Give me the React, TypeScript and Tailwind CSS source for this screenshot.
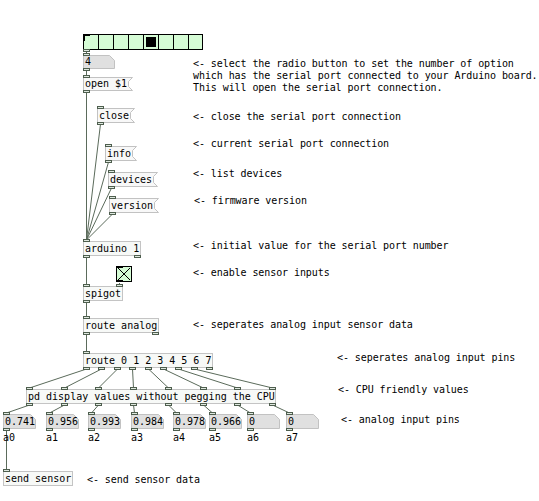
type Kind = "obj" | "msg" | "num";

type Box = {
  id: string;
  kind: Kind;
  x: number;
  y: number;
  w: number;
  h: number;
  text: string;
  ins: number;
  outs: number;
};

const MONO = "font-['DejaVu_Sans_Mono','Liberation_Mono',monospace] text-[10px] leading-[12px] text-black whitespace-pre";

const NUM_X = [3, 46, 88, 131, 173, 209, 247, 286];
const NUM_VALS = ["0.741", "0.956", "0.993", "0.984", "0.978", "0.966", "0", "0"];

const boxes: Box[] = [
  { id: "n4", kind: "num", x: 83, y: 55, w: 32, h: 14, text: "4", ins: 1, outs: 1 },
  { id: "open", kind: "msg", x: 83, y: 77, w: 46, h: 14, text: "open $1", ins: 1, outs: 1 },
  { id: "close", kind: "msg", x: 97, y: 108, w: 34, h: 15, text: "close", ins: 1, outs: 1 },
  { id: "info", kind: "msg", x: 105, y: 146, w: 28, h: 15, text: "info", ins: 1, outs: 1 },
  { id: "devices", kind: "msg", x: 108, y: 172, w: 46, h: 15, text: "devices", ins: 1, outs: 1 },
  { id: "version", kind: "msg", x: 109, y: 198, w: 46, h: 15, text: "version", ins: 1, outs: 1 },
  { id: "arduino", kind: "obj", x: 83, y: 241, w: 58, h: 15, text: "arduino 1", ins: 1, outs: 2 },
  { id: "spigot", kind: "obj", x: 83, y: 286, w: 40, h: 15, text: "spigot", ins: 2, outs: 1 },
  { id: "routeA", kind: "obj", x: 83, y: 318, w: 76, h: 15, text: "route analog", ins: 1, outs: 2 },
  { id: "route", kind: "obj", x: 83, y: 353, w: 130, h: 15, text: "route 0 1 2 3 4 5 6 7", ins: 1, outs: 9 },
  { id: "pd", kind: "obj", x: 26, y: 389, w: 250, h: 15, text: "pd display values without pegging the CPU", ins: 8, outs: 8 },
  ...NUM_X.map((x, i) => ({
    id: "a" + i,
    kind: "num" as Kind,
    x,
    y: 414,
    w: 33,
    h: 15,
    text: NUM_VALS[i],
    ins: 1,
    outs: 1,
  })),
  { id: "send", kind: "obj", x: 3, y: 471, w: 70, h: 15, text: "send sensor", ins: 1, outs: 0 },
];

const radio = { x: 83, y: 34, w: 120, h: 16 };
const toggle = { x: 116, y: 266, w: 16, h: 16 };

const comments: { x: number; y: number; lines: string[] }[] = [
  {
    x: 193,
    y: 58,
    lines: [
      "<- select the radio button to set the number of option",
      "which has the serial port connected to your Arduino board.",
      "This will open the serial port connection.",
    ],
  },
  { x: 193, y: 111, lines: ["<- close the serial port connection"] },
  { x: 193, y: 138, lines: ["<- current serial port connection"] },
  { x: 193, y: 168, lines: ["<- list devices"] },
  { x: 194, y: 195, lines: ["<- firmware version"] },
  { x: 193, y: 240, lines: ["<- initial value for the serial port number"] },
  { x: 193, y: 267, lines: ["<- enable sensor inputs"] },
  { x: 193, y: 319, lines: ["<- seperates analog input sensor data"] },
  { x: 337, y: 352, lines: ["<- seperates analog input pins"] },
  { x: 338, y: 384, lines: ["<- CPU friendly values"] },
  { x: 341, y: 414, lines: ["<- analog input pins"] },
  { x: 87, y: 474, lines: ["<- send sensor data"] },
];

type Pt = { x: number; y: number };

function portX(x: number, w: number, n: number, i: number) {
  if (n <= 1) return x;
  return x + Math.round(((w - 7) * i) / (n - 1));
}

const byId: Record<string, Box> = Object.fromEntries(boxes.map((b) => [b.id, b]));

function outPt(id: string, i: number): Pt {
  if (id === "radio") return { x: radio.x + 3.5, y: radio.y + radio.h + 1 };
  if (id === "toggle") return { x: toggle.x + 3.5, y: toggle.y + toggle.h + 1 };
  const b = byId[id];
  return { x: portX(b.x, b.w, b.outs, i) + 3.5, y: b.y + b.h + 1 };
}

function inPt(id: string, i: number): Pt {
  const b = byId[id];
  return { x: portX(b.x, b.w, b.ins, i) + 3.5, y: b.y - 1 };
}

const wires: [string, number, string, number][] = [
  ["radio", 0, "n4", 0],
  ["n4", 0, "open", 0],
  ["open", 0, "arduino", 0],
  ["close", 0, "arduino", 0],
  ["info", 0, "arduino", 0],
  ["devices", 0, "arduino", 0],
  ["version", 0, "arduino", 0],
  ["arduino", 0, "spigot", 0],
  ["toggle", 0, "spigot", 1],
  ["spigot", 0, "routeA", 0],
  ["routeA", 0, "route", 0],
  ...Array.from({ length: 8 }, (_, i) => ["route", i, "pd", i] as [string, number, string, number]),
  ...Array.from({ length: 8 }, (_, i) => ["pd", i, "a" + i, 0] as [string, number, string, number]),
  ["a0", 0, "send", 0],
];

function Port({ x, y }: { x: number; y: number }) {
  return <rect x={x + 0.5} y={y + 0.5} width={6} height={2} fill="#dfe8df" stroke="#4e5e4e" strokeWidth={1} />;
}

function Node({ b }: { b: Box }) {
  const { w, h } = b;
  let shape;
  if (b.kind === "msg") {
    shape = (
      <polygon
        points={`0.5,0.5 ${w + 3.5},0.5 ${w - 0.5},4.5 ${w - 0.5},${h - 4.5} ${w + 3.5},${h - 0.5} 0.5,${h - 0.5}`}
        fill="#f8f8f8"
        stroke="#c2c2c2"
      />
    );
  } else if (b.kind === "num") {
    shape = (
      <polygon
        points={`0.5,0.5 ${w - 5.5},0.5 ${w - 0.5},5.5 ${w - 0.5},${h - 0.5} 0.5,${h - 0.5}`}
        fill="#e0e0e0"
        stroke="#c2c2c2"
      />
    );
  } else {
    shape = <rect x={0.5} y={0.5} width={w - 1} height={h - 1} fill="#f7f9f7" stroke="#c4c4c4" />;
  }
  return (
    <div className="absolute" style={{ left: b.x, top: b.y, width: b.w, height: b.h }}>
      <svg className="absolute left-0 top-0 overflow-visible" width={w} height={h}>
        {shape}
        {Array.from({ length: b.ins }, (_, i) => (
          <Port key={"i" + i} x={portX(0, w, b.ins, i)} y={-2} />
        ))}
        {Array.from({ length: b.outs }, (_, i) => (
          <Port key={"o" + i} x={portX(0, w, b.outs, i)} y={h - 1} />
        ))}
      </svg>
      <div className={`absolute inset-0 flex items-center pl-[2px] ${MONO}`}>{b.text}</div>
    </div>
  );
}

function Radio() {
  const cell = radio.w / 8;
  return (
    <div className="absolute" style={{ left: radio.x, top: radio.y, width: radio.w, height: radio.h }}>
      <svg className="absolute left-0 top-0 overflow-visible" width={radio.w} height={radio.h}>
        <rect x={0.5} y={0.5} width={radio.w - 1} height={radio.h - 1} fill="#d6fcd6" stroke="#000" />
        {Array.from({ length: 7 }, (_, i) => (
          <line key={i} x1={(i + 1) * cell + 0.5} y1={0} x2={(i + 1) * cell + 0.5} y2={radio.h} stroke="#000" />
        ))}
        <rect x={4 * cell + 3} y={3} width={cell - 5} height={radio.h - 6} fill="#000" />
        <rect x={0} y={0} width={7} height={2} fill="#000" />
        <rect x={0} y={0} width={2} height={7} fill="#000" />
        <Port x={0} y={radio.h - 1} />
      </svg>
    </div>
  );
}

function Toggle() {
  const { w, h } = toggle;
  return (
    <div className="absolute" style={{ left: toggle.x, top: toggle.y, width: w, height: h }}>
      <svg className="absolute left-0 top-0 overflow-visible" width={w} height={h}>
        <rect x={0.5} y={0.5} width={w - 1} height={h - 1} fill="#d6fcd6" stroke="#000" />
        <line x1={2} y1={2} x2={w - 2} y2={h - 2} stroke="#000" />
        <line x1={w - 2} y1={2} x2={2} y2={h - 2} stroke="#000" />
        <rect x={0} y={0} width={7} height={2} fill="#000" />
        <rect x={0} y={h - 2} width={7} height={2} fill="#000" />
      </svg>
    </div>
  );
}

export default function App() {
  return (
    <div className="relative w-[539px] h-[501px] overflow-hidden bg-white">
      <svg className="absolute left-0 top-0" width={539} height={501}>
        {wires.map(([a, ai, b, bi], k) => {
          const p = outPt(a, ai);
          const q = inPt(b, bi);
          return <line key={k} x1={p.x} y1={p.y} x2={q.x} y2={q.y} stroke="#5b6b5b" strokeWidth={1} />;
        })}
      </svg>

      <Radio />
      <Toggle />
      {boxes.map((b) => (
        <Node key={b.id} b={b} />
      ))}

      {NUM_X.map((x, i) => (
        <div key={i} className={`absolute ${MONO}`} style={{ left: x, top: 432 }}>
          {"a" + i}
        </div>
      ))}

      {comments.map((c, i) => (
        <div
          key={i}
          className={`absolute flex flex-col leading-[11px] tracking-[-0.08px] ${MONO}`}
          style={{ left: c.x, top: c.y }}
        >
          {c.lines.map((l, j) => (
            <span key={j}>{l}</span>
          ))}
        </div>
      ))}
    </div>
  );
}
